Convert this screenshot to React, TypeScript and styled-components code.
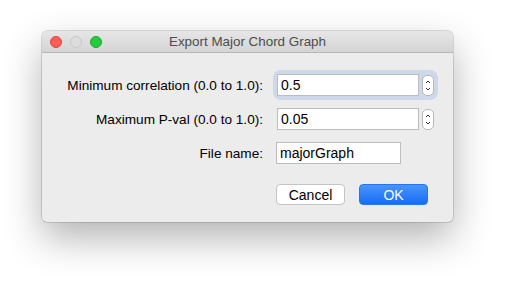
import styled, { createGlobalStyle } from "styled-components";

const GlobalStyle = createGlobalStyle`
  html, body {
    margin: 0;
    padding: 0;
    background: #ffffff;
  }
  body {
    font-family: "Liberation Sans", Arial, sans-serif;
  }
`;

const Page = styled.div`
  width: 522px;
  height: 290px;
  padding: 31px 0 0 42px;
  box-sizing: border-box;
  overflow: hidden;
`;

const Window = styled.div`
  width: 411px;
  height: 191px;
  border-radius: 5px;
  background: #ececec;
  box-shadow: 0 0 0 0.5px rgba(0, 0, 0, 0.25), 0 16px 38px rgba(0, 0, 0, 0.3);
  display: flex;
  flex-direction: column;
  overflow: hidden;
`;

const TitleBar = styled.div`
  height: 21px;
  flex-shrink: 0;
  position: relative;
  display: flex;
  align-items: center;
  justify-content: center;
  background: linear-gradient(#e6e6e6, #d4d4d4);
  border-bottom: 1px solid #b7b7b7;
  font-size: 13.4px;
  color: #4d4d4d;
`;

const Lights = styled.div`
  position: absolute;
  left: 8px;
  top: 5px;
  display: flex;
  gap: 8px;
`;

const Light = styled.span<{ $color: string; $edge: string }>`
  width: 12px;
  height: 12px;
  border-radius: 50%;
  box-sizing: border-box;
  background: ${(p) => p.$color};
  border: 0.5px solid ${(p) => p.$edge};
`;

const Form = styled.div`
  display: grid;
  grid-template-columns: 221px auto;
  column-gap: 13px;
  row-gap: 12px;
  padding-top: 21px;
  align-items: center;
`;

const Label = styled.label`
  text-align: right;
  font-size: 13.6px;
  color: #000;
  white-space: nowrap;
`;

const SpinnerWrap = styled.div<{ $focused?: boolean }>`
  display: flex;
  align-items: center;
  gap: 3px;
  width: 157px;
  margin-left: 1px;
  border-radius: 4px;
  box-shadow: ${(p) => (p.$focused ? "0 0 0 4px #cfd8e8" : "none")};
  background: ${(p) => (p.$focused ? "#cfd8e8" : "transparent")};
`;

const Field = styled.div<{ $width: number }>`
  width: ${(p) => p.$width}px;
  height: 22px;
  box-sizing: border-box;
  background: #ffffff;
  border: 1px solid #bdbdbd;
  font-size: 14px;
  color: #000;
  padding-left: 3px;
  display: flex;
  align-items: center;
`;

const Stepper = styled.div`
  width: 12px;
  height: 21px;
  box-sizing: border-box;
  border: 1px solid #b8b8b8;
  border-radius: 5px;
  background: #fff;
  display: flex;
  align-items: center;
  justify-content: center;
`;

const Buttons = styled.div`
  grid-column: 2;
  display: flex;
  gap: 14px;
  margin-top: 8px;
`;

const Button = styled.div<{ $primary?: boolean }>`
  width: 69px;
  height: 21px;
  box-sizing: border-box;
  border-radius: 4px;
  display: flex;
  align-items: center;
  justify-content: center;
  font-size: 14px;
  color: ${(p) => (p.$primary ? "#ffffff" : "#000")};
  background: ${(p) =>
    p.$primary ? "linear-gradient(#4a94fd, #156cf6)" : "#ffffff"};
  border: 1px solid ${(p) => (p.$primary ? "#2a74f2" : "#c4c4c4")};
`;

const Chevrons = () => (
  <svg width="8" height="15" viewBox="0 0 8 15">
    <path d="M2 5 L4 3 L6 5" fill="none" stroke="#333" strokeWidth="1" />
    <path d="M2 10 L4 12 L6 10" fill="none" stroke="#333" strokeWidth="1" />
  </svg>
);

export default function App() {
  return (
    <Page>
      <GlobalStyle />
      <Window>
        <TitleBar>
          <Lights>
            <Light $color="#fc5d55" $edge="#e0443e" />
            <Light $color="#dcdcdc" $edge="#c8c8c8" />
            <Light $color="#27c93f" $edge="#1aab29" />
          </Lights>
          Export Major Chord Graph
        </TitleBar>
        <Form>
          <Label>Minimum correlation (0.0 to 1.0):</Label>
          <SpinnerWrap $focused>
            <Field $width={142}>0.5</Field>
            <Stepper>
              <Chevrons />
            </Stepper>
          </SpinnerWrap>
          <Label>Maximum P-val (0.0 to 1.0):</Label>
          <SpinnerWrap>
            <Field $width={142}>0.05</Field>
            <Stepper>
              <Chevrons />
            </Stepper>
          </SpinnerWrap>
          <Label>File name:</Label>
          <Field $width={125}>majorGraph</Field>
          <Buttons>
            <Button>Cancel</Button>
            <Button $primary>OK</Button>
          </Buttons>
        </Form>
      </Window>
    </Page>
  );
}
